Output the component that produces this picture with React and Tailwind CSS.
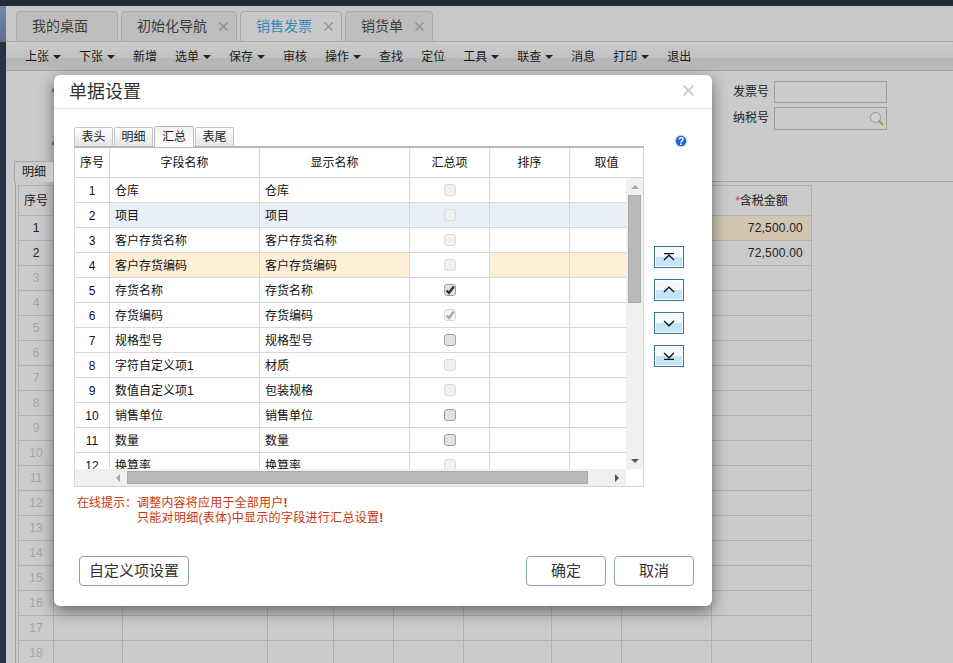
import React from 'react';

const tabs = [
  { label: '我的桌面', closable: false },
  { label: '初始化导航', closable: true },
  { label: '销售发票', closable: true, active: true },
  { label: '销货单', closable: true },
];

const tools = [
  ['上张', true], ['下张', true], ['新增', false], ['选单', true], ['保存', true], ['审核', false], ['操作', true],
  ['查找', false], ['定位', false], ['工具', true], ['联查', true], ['消息', false], ['打印', true], ['退出', false],
];

const fields = [
  { name: '仓库', show: '仓库', box: 'off' },
  { name: '项目', show: '项目', box: 'off', tone: 'blue' },
  { name: '客户存货名称', show: '客户存货名称', box: 'off' },
  { name: '客户存货编码', show: '客户存货编码', box: 'off', tone: 'orange' },
  { name: '存货名称', show: '存货名称', box: 'checked' },
  { name: '存货编码', show: '存货编码', box: 'locked' },
  { name: '规格型号', show: '规格型号', box: 'open' },
  { name: '字符自定义项1', show: '材质', box: 'off' },
  { name: '数值自定义项1', show: '包装规格', box: 'off' },
  { name: '销售单位', show: '销售单位', box: 'open' },
  { name: '数量', show: '数量', box: 'open' },
  { name: '换算率', show: '换算率', box: 'off' },
];

const pageCols = [36, 69, 145, 66, 60, 70, 88, 70, 90, 100];
const settingCols = [35, 150, 150, 80, 80, 73];

const Cross = ({ className }) => (
  <svg width="9" height="9" viewBox="0 0 9 9" className={className}>
    <path d="M0.5 0.5L8.5 8.5M8.5 0.5L0.5 8.5" stroke="currentColor" strokeWidth="1.4" fill="none" />
  </svg>
);

const CheckBox = ({ state }) => {
  const look = {
    off: 'bg-[#f1f1f1] border-[#dcdcdc]',
    open: 'bg-[#e2e2e2] border-[#a0a0a0]',
    checked: 'bg-[#e2e2e2] border-[#a0a0a0]',
    locked: 'bg-[#f1f1f1] border-[#dcdcdc]',
  }[state];
  return (
    <span className={`flex items-center justify-center w-[12px] h-[12px] mx-auto rounded-[3px] border ${look}`}>
      {(state === 'checked' || state === 'locked') && (
        <svg width="10" height="10" viewBox="0 0 10 10">
          <path
            d="M1.5 5.5L4 8L8.8 1.5"
            stroke={state === 'checked' ? '#333' : '#a9a9a9'}
            strokeWidth="2.4"
            fill="none"
          />
        </svg>
      )}
    </span>
  );
};

const MoveButton = ({ d }) => (
  <button className="flex items-center justify-center w-[30px] h-[22px] border border-[#3d7599] shadow-[inset_0_0_0_1px_#ffffff] bg-[linear-gradient(#f4fafd_0%,#f4fafd_50%,#c5e4f7_50%,#c5e4f7_100%)]">
    <svg width="12" height="8" viewBox="0 0 12 8">
      <path d={d} stroke="#111" strokeWidth="1.3" fill="none" />
    </svg>
  </button>
);

const Triangle = ({ dir }) => {
  const d = { up: 'M0 5L4 1L8 5Z', down: 'M0 1L8 1L4 5Z', left: 'M5 0L5 8L1 4Z', right: 'M1 0L1 8L5 4Z' }[dir];
  const size = dir === 'up' || dir === 'down' ? 'w-[8px] h-[6px]' : 'w-[6px] h-[8px]';
  const fill = dir === 'up' || dir === 'left' ? '#a8a8a8' : '#555';
  return (
    <svg viewBox={dir === 'up' || dir === 'down' ? '0 0 8 6' : '0 0 6 8'} className={size}>
      <path d={d} fill={fill} />
    </svg>
  );
};

const SettingsDialog = () => (
  <div className="absolute left-[54px] top-[75px] w-[658px] h-[531px] bg-white rounded-[6px] shadow-[0_5px_15px_rgba(0,0,0,0.5)] flex flex-col">
    <div className="h-[34px] border-b border-[#e5e5e5] flex items-center justify-between pl-[15px] pr-[18px] shrink-0">
      <h2 className="text-[18px] leading-[18px] text-[#333]">单据设置</h2>
      <svg width="11" height="11" viewBox="0 0 11 11" className="text-[#cfcfcf] mb-[2px]">
        <path d="M0.5 0.5L10.5 10.5M10.5 0.5L0.5 10.5" stroke="currentColor" strokeWidth="2" fill="none" />
      </svg>
    </div>

    <div className="flex pl-[20px] pt-[18px]">
      <div className="w-[570px]">
        <div className="flex items-end h-[19px] gap-[1px] text-[12px] text-[#222]">
          {['表头', '明细', '汇总', '表尾'].map((t) => (
            <div
              key={t}
              className={
                t === '汇总'
                  ? 'w-[40px] h-[21px] -mb-[1px] z-10 flex items-center justify-center border border-b-0 border-[#bdbdbd] rounded-t-[2px] bg-[linear-gradient(#f0f0f0,#ffffff)]'
                  : 'w-[39px] h-[19px] flex items-center justify-center border border-b-0 border-[#c4c4c4] rounded-t-[2px] bg-[linear-gradient(#ffffff,#e4e4e4)]'
              }
            >
              {t}
            </div>
          ))}
        </div>

        <div className="h-[341px] border border-[#d8d8d8] border-t-2 border-t-[#b8b8b8] flex flex-col text-[12px] text-[#111]">
          <table className="table-fixed w-[568px] border-separate border-spacing-0 shrink-0">
            <colgroup>
              {settingCols.map((w, i) => <col key={i} style={{ width: w }} />)}
            </colgroup>
            <thead>
              <tr className="h-[30px]">
                {['序号', '字段名称', '显示名称', '汇总项', '排序', '取值'].map((h, i) => (
                  <th key={h} className={`font-normal text-center pt-[1px] border-b border-[#d8d8d8] ${i < 5 ? 'border-r' : ''}`}>{h}</th>
                ))}
              </tr>
            </thead>
          </table>

          <div className="flex h-[291px] shrink-0">
            <div className="w-[551px] overflow-hidden">
              <table className="table-fixed w-[568px] border-separate border-spacing-0">
                <colgroup>
                  {settingCols.map((w, i) => <col key={i} style={{ width: w }} />)}
                </colgroup>
                <tbody>
                  {fields.map((f, i) => {
                    const tint = f.tone === 'blue' ? 'bg-[#e9f0f8]' : f.tone === 'orange' ? 'bg-[#ffefd6]' : '';
                    const line = 'border-b border-r border-[#d8d8d8]';
                    return (
                      <tr key={f.name} className="h-[25px]">
                        <td className={`text-center pt-[1px] ${line}`}>{i + 1}</td>
                        <td className={`pl-[5px] pt-[1px] ${line} ${tint}`}>{f.name}</td>
                        <td className={`pl-[5px] pt-[1px] ${line} ${tint}`}>{f.show}</td>
                        <td className={`${line} ${f.tone === 'blue' ? tint : ''}`}><CheckBox state={f.box} /></td>
                        <td className={`${line} ${tint}`}></td>
                        <td className={`border-b border-[#d8d8d8] ${tint}`}></td>
                      </tr>
                    );
                  })}
                </tbody>
              </table>
            </div>
            <div className="w-[17px] bg-[#f0f0f0] flex flex-col items-center">
              <div className="h-[17px] flex items-center justify-center"><Triangle dir="up" /></div>
              <div className="flex-1">
                <div className="w-[13px] h-[108px] bg-[#b9b9b9] border border-[#a9a9a9]"></div>
              </div>
              <div className="h-[17px] flex items-center justify-center"><Triangle dir="down" /></div>
            </div>
          </div>

          <div className="flex h-[17px] shrink-0">
            <div className="w-[551px] bg-[#f0f0f0] flex items-center">
              <div className="w-[52px] flex justify-end pr-[6px]"><Triangle dir="left" /></div>
              <div className="w-[461px] h-[13px] bg-[#b9b9b9] border border-[#a9a9a9]"></div>
              <div className="flex-1 flex justify-end pr-[6px]"><Triangle dir="right" /></div>
            </div>
          </div>
        </div>

        <div className="flex mt-[9px] ml-[3px] text-[12px] leading-[15px] text-[#c8360a]">
          <span className="w-[60px]">在线提示：</span>
          <div>
            <p className="tracking-[0.2px]">调整内容将应用于全部用户<span className="font-bold">!</span></p>
            <p className="tracking-[0.3px]">只能对明细(表体)中显示的字段进行汇总设置<span className="font-bold">!</span></p>
          </div>
        </div>
      </div>

      <div className="pl-[10px] flex flex-col">
        <svg width="14" height="14" viewBox="0 0 14 14" className="ml-[20px] mt-[7px]">
          <circle cx="7" cy="7" r="6.5" fill="#cfe0f7" />
          <circle cx="7" cy="7" r="5.2" fill="#2560c8" />
          <text x="7" y="10.6" textAnchor="middle" fontSize="10" fontWeight="700" fill="#fff">?</text>
        </svg>
        <div className="mt-[98px] flex flex-col gap-[11px]">
          <MoveButton d="M1 0.6H11M1 7L6 2.2L11 7" />
          <MoveButton d="M1 6L6 1.2L11 6" />
          <MoveButton d="M1 2L6 6.8L11 2" />
          <MoveButton d="M1 1L6 5.8L11 1M1 7.4H11" />
        </div>
      </div>
    </div>

    <div className="flex-1"></div>
    <div className="flex justify-between pl-[25px] pr-[18px] pb-[20px] text-[15px] text-[#333]">
      <button className="w-[110px] h-[30px] rounded-[4px] border border-[#8fa0b3] bg-white">自定义项设置</button>
      <div className="flex gap-[8px]">
        <button className="w-[80px] h-[30px] rounded-[4px] border border-[#8fa0b3] bg-white">确定</button>
        <button className="w-[80px] h-[30px] rounded-[4px] border border-[#8fa0b3] bg-white">取消</button>
      </div>
    </div>
  </div>
);

const App = () => {
  const rows = Array.from({ length: 18 }, (_, i) => i + 1);

  return (
    <div className="relative w-[953px] h-[663px] overflow-hidden bg-[#cbcbcb] flex flex-col text-[12px] text-[#222] [font-family:'Liberation_Sans','Noto_Sans_CJK_SC',sans-serif]">
      <div className="h-[6px] bg-[#232a3a] shrink-0"></div>
      <div className="flex flex-1 min-h-0">
        <div className="w-[6px] shrink-0 flex flex-col bg-[#2a3040]">
          <div className="h-[36px] bg-[linear-gradient(#7186a8,#5f7192)]"></div>
        </div>

        <div className="flex-1 min-w-0 flex flex-col">
          <div className="h-[36px] shrink-0 bg-[#c8c8c8] border-b border-[#a9a9a9] flex items-end pl-[10px] gap-[3px]">
            {tabs.map((t) => (
              <div
                key={t.label}
                className={`h-[31px] -mb-[1px] pb-[1px] flex items-center pl-[15px] border border-[#a9a9a9] rounded-t-[4px] text-[14px] ${
                  t.active ? 'bg-[#c9c9c9] text-[#2e8cbd]' : 'bg-[#bdbdbd] text-[#3c3c3c]'
                } ${t.closable ? 'pr-[8px]' : 'pr-[29px]'}`}
              >
                {t.label}
                {t.closable && <Cross className="ml-[12px] text-[#8f8f8f]" />}
              </div>
            ))}
          </div>

          <div className="h-[29px] shrink-0 pt-[1px] bg-[linear-gradient(#cbcbcb,#c2c2c2_55%,#b5b5b5_60%,#bcbcbc)] border-b border-[#a6a6a6] flex items-center pl-[19px] text-[12px] text-[#1c1c1c]">
            {tools.map(([label, caret]) => (
              <div key={label} className="flex items-center mr-[18px]">
                {label}
                {caret && <span className="ml-[4px] w-0 h-0 border-x-[4px] border-x-transparent border-t-[4px] border-t-[#222]"></span>}
              </div>
            ))}
          </div>

          <div className="h-[90px] shrink-0 flex justify-end pr-[66px] pt-[10px]">
            <div className="flex flex-col gap-[4px]">
              <div className="flex items-center gap-[5px]">
                <span>发票号</span>
                <div className="w-[113px] h-[22px] border border-[#9d9d9d]"></div>
              </div>
              <div className="flex items-center gap-[5px]">
                <span className="-mt-[2px]">纳税号</span>
                <div className="w-[113px] h-[23px] border border-[#9d9d9d] flex items-center justify-end pr-[1px]">
                  <svg width="16" height="16" viewBox="0 0 16 16">
                    <path d="M9.5 9.5L14 14" stroke="#b99a45" strokeWidth="2.4" />
                    <circle cx="6.5" cy="6.5" r="5" fill="#c9d3d9" stroke="#8f9aa0" />
                  </svg>
                </div>
              </div>
            </div>
          </div>

          <div className="flex-1 min-h-0 ml-[9px] relative">
            <div className="h-[20px] flex items-end">
              <div className="w-[40px] h-[21px] -ml-[1px] -mb-[1px] z-10 flex items-center justify-center border border-b-0 border-[#a5a5a5] rounded-t-[2px] bg-[#cbcbcb] text-[12px] text-[#222]">明细</div>
            </div>
            <div className="h-[500px] border-t border-l border-[#a5a5a5] pl-[2px] pt-[3px]">
              <table className="table-fixed w-[794px] border-separate border-spacing-0 border-l border-[#b0b0b0]">
                <colgroup>
                  {pageCols.map((w, i) => <col key={i} style={{ width: i === 0 ? w - 1 : w }} />)}
                </colgroup>
                <thead>
                  <tr className="h-[31px]">
                    {['序号', '', '', '', '', '', '', '', ''].map((h, i) => (
                      <th key={i} className="font-normal text-center pt-[1px] border-y border-r border-[#b0b0b0]">{h}</th>
                    ))}
                    <th className="font-normal text-center pt-[1px] border-y border-r border-[#b0b0b0]">
                      <span className="text-[#d2386a]">*</span>含税金额
                    </th>
                  </tr>
                </thead>
                <tbody>
                  {rows.map((n) => (
                    <tr key={n} className="h-[25px]">
                      <td className={`text-center border-b border-r border-[#b0b0b0] ${n < 3 ? 'text-[#222]' : 'text-[#a4a4a4]'}`}>{n}</td>
                      {pageCols.slice(1, -1).map((w) => (
                        <td key={w} className={`border-b border-r border-[#b0b0b0] ${n === 1 ? 'bg-[#d2c6b0]' : ''}`}></td>
                      ))}
                      <td className={`text-right pr-[8px] tracking-[0.2px] border-b border-r border-[#b0b0b0] ${n === 1 ? 'bg-[#d2c6b0]' : ''}`}>
                        {n < 3 ? '72,500.00' : ''}
                      </td>
                    </tr>
                  ))}
                </tbody>
              </table>
            </div>
          </div>
        </div>
      </div>

      <span className="absolute left-[51px] top-[84px] text-[#c0305a]">*</span>
      <span className="absolute left-[51px] top-[137px] text-[#c0305a]">*</span>

      <SettingsDialog />
    </div>
  );
};

export default App;
